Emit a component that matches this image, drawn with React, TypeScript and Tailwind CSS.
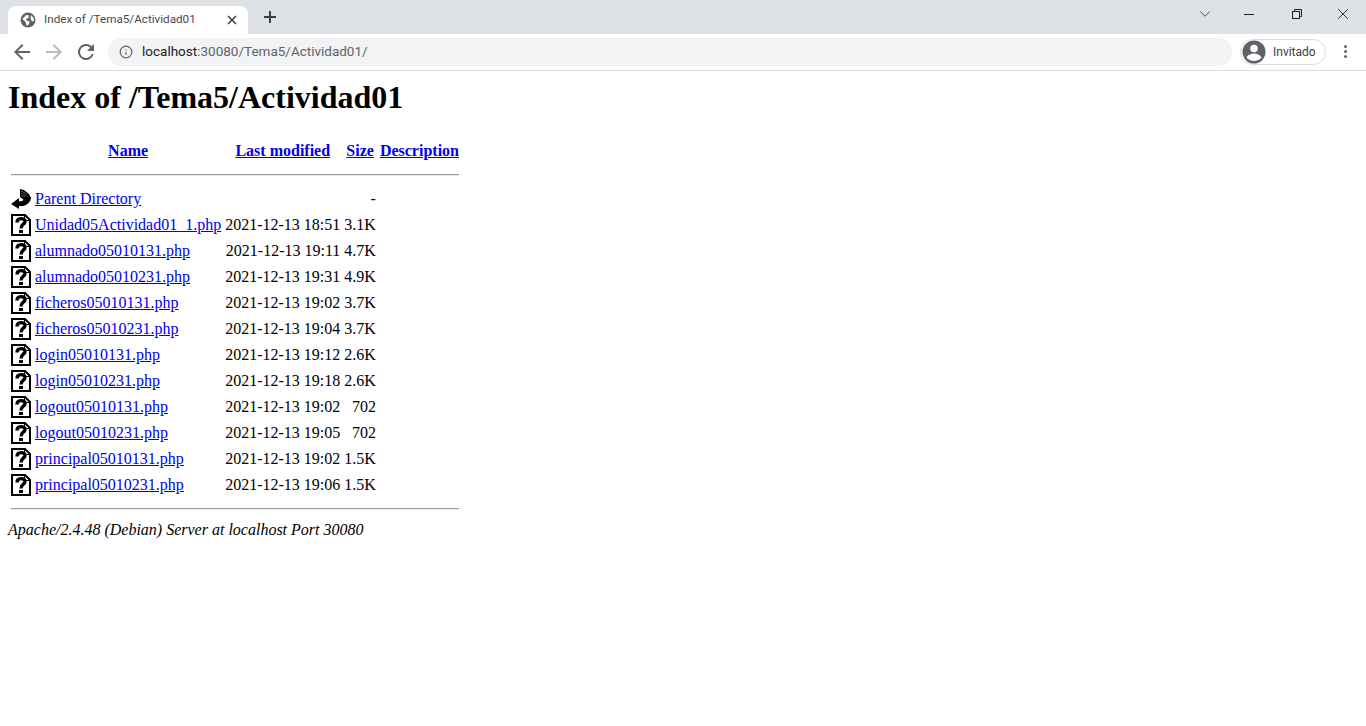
import { ChevronDown, Info, X } from "lucide-react"

const files = [
  ["Unidad05Actividad01_1.php", "2021-12-13 18:51", "3.1K"],
  ["alumnado05010131.php", "2021-12-13 19:11", "4.7K"],
  ["alumnado05010231.php", "2021-12-13 19:31", "4.9K"],
  ["ficheros05010131.php", "2021-12-13 19:02", "3.7K"],
  ["ficheros05010231.php", "2021-12-13 19:04", "3.7K"],
  ["login05010131.php", "2021-12-13 19:12", "2.6K"],
  ["login05010231.php", "2021-12-13 19:18", "2.6K"],
  ["logout05010131.php", "2021-12-13 19:02", "702"],
  ["logout05010231.php", "2021-12-13 19:05", "702"],
  ["principal05010131.php", "2021-12-13 19:02", "1.5K"],
  ["principal05010231.php", "2021-12-13 19:06", "1.5K"],
]

function UnknownIcon() {
  return (
    <svg width="20" height="22" viewBox="0 0 20 22" className="block">
      <path d="M1 1h13l5 5v15H1z" fill="#fff" stroke="#000" strokeWidth="2" />
      <path d="M13 1h1v5h5v1h-6z" fill="#000" />
      <path d="M6 8.500C6 3.500 14 3.500 14 7.500C14 10.500 10 10 10 14.500" fill="none" stroke="#000" strokeWidth="3.400" />
      <rect x="8" y="16" width="4" height="3" fill="#000" />
    </svg>
  )
}

function BackIcon() {
  return (
    <svg width="20" height="22" viewBox="0 0 20 22" className="block">
      <path d="M0 16L8 10V13C11 14 13 12 13 10L20 9C20 15 14 19 8 18V21Z" fill="#000" />
      <path d="M9 1L13 2L18 6L20 10L13 12L9 9Z" fill="#000" />
      <path d="M11 3v5M13 4v5M15 5v4" stroke="#999" strokeWidth="1" strokeDasharray="1 1" />
    </svg>
  )
}

function GlobeIcon() {
  return (
    <svg width="16" height="16" viewBox="0 0 16 16">
      <circle cx="8" cy="8" r="7.500" fill="#5f6368" />
      <path d="M2.500 7L6 3l3 .5-.5 2.500L6 7l1 2 2.500.5L9 12l-2 2-1.500-4zM11 3l2.500 3 .5 3-2 .5-1.500-3z" fill="#fff" />
    </svg>
  )
}

function RestoreIcon() {
  return (
    <svg width="12" height="12" viewBox="0 0 12 12" fill="none" stroke="#1f1f1f" strokeWidth="1">
      <rect x="1.500" y="3.500" width="7" height="7" />
      <path d="M3.500 3.500v-2h7v7h-2" />
    </svg>
  )
}

function AvatarIcon() {
  return (
    <svg width="24" height="24" viewBox="0 0 24 24">
      <circle cx="12" cy="12" r="11.500" fill="#5f6368" />
      <circle cx="12" cy="8.500" r="3.800" fill="#fff" />
      <path d="M4.500 17.500c1.500-3 5-4 7.500-4s6 1 7.500 4c-1.800 2.200-4.500 3.500-7.500 3.500s-5.700-1.300-7.500-3.500z" fill="#fff" />
    </svg>
  )
}

// Chrome's toolbar arrows, filled rather than stroked
function ToolbarArrow({ className }: { className: string }) {
  return (
    <svg width="16" height="16" viewBox="0 0 16 16" className={className} fill="currentColor">
      <path d="M16 7H3.800l5.600-5.600L8 0 0 8l8 8 1.400-1.400L3.800 9H16z" />
    </svg>
  )
}

function ReloadIcon() {
  return (
    <svg width="16" height="16" viewBox="0 0 16 16" fill="#5f6368">
      <path d="M13.650 2.350A8 8 0 1 0 15.740 10h-2.080A6 6 0 1 1 8 2c1.660 0 3.140.69 4.220 1.780L9 7h7V0z" />
    </svg>
  )
}

function BrowserChrome() {
  return (
    <div className="font-['Roboto',sans-serif]">
      <div className="flex h-[34px] items-end bg-[#dee1e6]">
        <div className="ml-2 flex h-[28px] w-[240px] items-center rounded-t-lg bg-white pl-[12px] pr-[9px]">
          <GlobeIcon />
          <span className="ml-[8px] flex-1 truncate text-[11.7px] text-[#45494e]">Index of /Tema5/Actividad01</span>
          <X size={14} strokeWidth={3} className="text-[#45494e]" />
        </div>
        <svg width="12" height="12" viewBox="0 0 12 12" fill="#3c4043" className="mb-[11px] ml-[16px]">
          <path d="M5 0h2v5h5v2H7v5H5V7H0V5h5z" />
        </svg>
        <div className="flex-1" />
        <div className="flex h-full items-start">
          <ChevronDown size={18} strokeWidth={1.2} className="mr-[30px] mt-[5px] text-[#3c4043]" />
          <div className="mr-[37px] mt-[14px] h-px w-[10px] bg-[#1f1f1f]" />
          <div className="mr-[31px] mt-[8px]"><RestoreIcon /></div>
          <X size={18} strokeWidth={1.2} className="mr-[14px] mt-[5px] text-[#1f1f1f]" />
        </div>
      </div>
      <div className="flex h-[37px] items-center border-b border-[#dadce0] bg-white pb-px">
        <ToolbarArrow className="ml-[14px] text-[#5f6368]" />
        <ToolbarArrow className="ml-[16px] rotate-180 text-[#b9bbbe]" />
        <div className="ml-[16px]"><ReloadIcon /></div>
        <div className="ml-[14px] flex h-7 flex-1 items-center rounded-full bg-[#f1f3f4] pl-[11px]">
          <Info size={14} strokeWidth={2} className="text-[#5f6368]" />
          <span className="ml-[9px] text-[13.5px] leading-none text-[#5f6368]">
            <span className="text-[#202124]">localhost</span>:30080/Tema5/Actividad01/
          </span>
        </div>
        <div className="ml-[8px] flex h-[26px] w-[86px] items-center rounded-full border border-[#dadce0] pl-px">
          <AvatarIcon />
          <span className="ml-[7px] text-xs text-[#3c4043]">Invitado</span>
        </div>
        <div className="ml-[18px] mr-[19px] flex flex-col gap-[2px]">
          <span className="size-[3px] rounded-full bg-[#5f6368]" />
          <span className="size-[3px] rounded-full bg-[#5f6368]" />
          <span className="size-[3px] rounded-full bg-[#5f6368]" />
        </div>
      </div>
    </div>
  )
}

function Hr() {
  return <hr className="border-t border-b border-t-[#999] border-b-[#eee]" />
}

export default function App() {
  return (
    <div className="min-h-[726px] bg-white text-black">
      <BrowserChrome />
      <div className="px-2 font-['Liberation_Serif',serif] text-base leading-[18px]">
        <h1 className="mt-[8px] mb-[23px] text-[32px] leading-[37px] font-bold">Index of /Tema5/Actividad01</h1>
        <table className="border-separate border-spacing-[2px]">
          <thead>
            <tr>
              <th className="p-px" />
              <th className="p-px"><a href="#" className="text-[#0000ee] underline">Name</a></th>
              <th className="p-px"><a href="#" className="text-[#0000ee] underline">Last modified</a></th>
              <th className="p-px"><a href="#" className="text-[#0000ee] underline">Size</a></th>
              <th className="p-px"><a href="#" className="text-[#0000ee] underline">Description</a></th>
            </tr>
            <tr>
              <th colSpan={5} className="p-px font-normal"><div className="mt-[10px] mb-2"><Hr /></div></th>
            </tr>
          </thead>
          <tbody>
            <tr>
              <td className="p-px align-top"><BackIcon /></td>
              <td className="p-px"><a href="#" className="text-[#0000ee] underline">Parent Directory</a></td>
              <td className="p-px" />
              <td className="p-px text-right">-</td>
              <td className="p-px" />
            </tr>
            {files.map(([name, date, size]) => (
              <tr key={name}>
                <td className="p-px align-top"><UnknownIcon /></td>
                <td className="p-px"><a href="#" className="text-[#0000ee] underline">{name}</a></td>
                <td className="p-px text-right">{date}</td>
                <td className="p-px text-right">{size}</td>
                <td className="p-px" />
              </tr>
            ))}
            <tr>
              <th colSpan={5} className="p-px font-normal"><div className="my-2"><Hr /></div></th>
            </tr>
          </tbody>
        </table>
        <address className="italic">Apache/2.4.48 (Debian) Server at localhost Port 30080</address>
      </div>
    </div>
  )
}
